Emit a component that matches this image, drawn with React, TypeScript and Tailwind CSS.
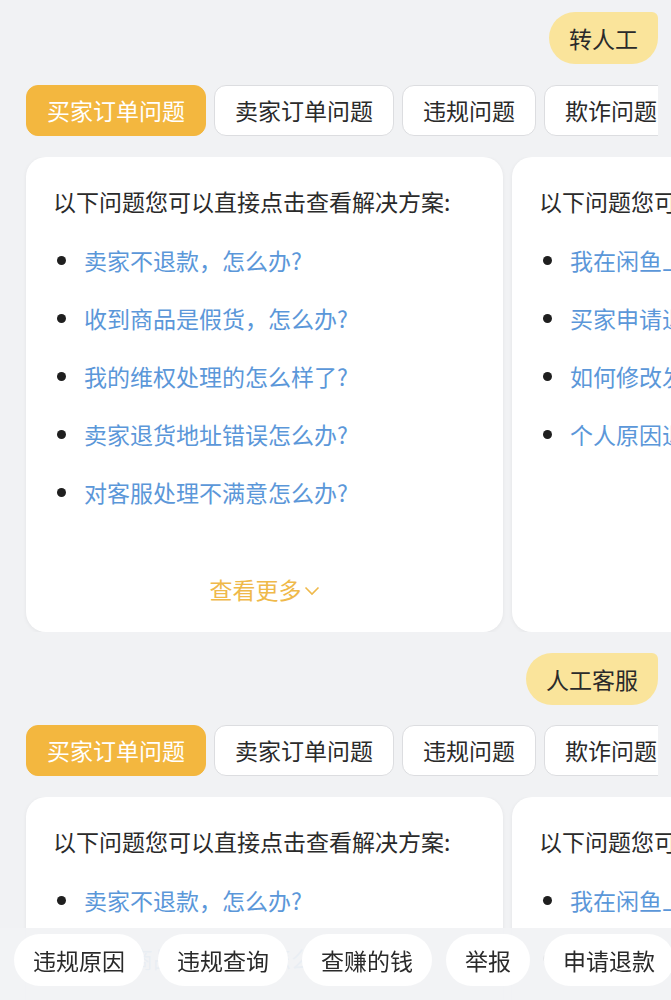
const tabs = ["买家订单问题", "卖家订单问题", "违规问题", "欺诈问题"];

const buyerQs = [
  "卖家不退款，怎么办?",
  "收到商品是假货，怎么办?",
  "我的维权处理的怎么样了?",
  "卖家退货地址错误怎么办?",
  "对客服处理不满意怎么办?",
];

const sellerQs = [
  "我在闲鱼上卖的东西被骗了怎么办?",
  "买家申请退款，怎么处理?",
  "如何修改发货地址?",
  "个人原因退款怎么办?",
];

const quick = ["违规原因", "违规查询", "查赚的钱", "举报", "申请退款"];

const Bubble = ({ text }: { text: string }) => (
  <div className="flex justify-end pr-[13px]">
    <div className="h-[52px] px-5 flex items-center rounded-[26px] rounded-tr-[6px] bg-[#fae49b] text-[23px] text-[#2a2a2a]">
      {text}
    </div>
  </div>
);

const Tabs = () => (
  <div className="ml-[26px] mr-[13px] overflow-hidden">
    <div className="flex gap-2 w-max">
      {tabs.map((t, i) => (
        <div
          key={t}
          className={
            i === 0
              ? "h-[51px] px-[20px] flex items-center rounded-xl bg-[#f3b73f] text-white text-[23px] border border-[#f3b73f]"
              : "h-[51px] px-[20px] flex items-center rounded-xl bg-white text-[#2a2a2a] text-[23px] border border-[#dcdde0]"
          }
        >
          {t}
        </div>
      ))}
    </div>
  </div>
);

const Card = ({ items, more }: { items: string[]; more?: boolean }) => (
  <div className="w-[477px] shrink-0 h-[475px] bg-white rounded-[20px] shadow-[0_1px_4px_rgba(0,0,0,0.06)] pt-[29px] px-[27px] flex flex-col whitespace-nowrap overflow-hidden">
    <div className="leading-[30px] text-[23px] text-[#2a2a2a]">
      以下问题您可以直接点击查看解决方案:
    </div>
    <ul className="mt-[15px]">
      {items.map((q) => (
        <li key={q} className="h-[58px] flex items-center">
          <span className="w-[9px] h-[9px] rounded-full bg-[#1f1f1f] ml-[4px] mr-[18px] shrink-0" />
          <span className="text-[23px] text-[#5b97d9]">{q}</span>
        </li>
      ))}
    </ul>
    {more && (
      <div className="mt-auto mb-[28px] flex justify-center items-center text-[23px] leading-[30px] text-[#efb94a]">
        查看更多
        <svg width="16" height="10" viewBox="0 0 16 10" className="ml-[2px] mt-[4px]">
          <path d="M1.5 1.5 L8 8 L14.5 1.5" fill="none" stroke="#efb94a" strokeWidth="1.6" />
        </svg>
      </div>
    )}
  </div>
);

const Cards = () => (
  <div className="pl-[26px] overflow-hidden">
    <div className="flex gap-[9px] w-max">
      <Card items={buyerQs} more />
      <Card items={sellerQs} />
    </div>
  </div>
);

export default function App() {
  return (
    <div className="min-h-screen bg-[#f1f2f4] font-['Noto_Sans_CJK_SC',sans-serif] pt-3 pb-[80px] overflow-hidden">
      <Bubble text="转人工" />
      <div className="mt-[21px]">
        <Tabs />
      </div>
      <div className="mt-[21px]">
        <Cards />
      </div>
      <div className="mt-[21px]">
        <Bubble text="人工客服" />
      </div>
      <div className="mt-5">
        <Tabs />
      </div>
      <div className="mt-[21px]">
        <Cards />
      </div>

      <div className="fixed left-0 right-0 bottom-0 h-[72px] bg-[#f1f2f4]/95 pt-[6px] pl-[14px] overflow-hidden">
        <div className="flex gap-[14px] w-max">
          {quick.map((q) => (
            <div
              key={q}
              className="h-[52px] px-[19px] flex items-center rounded-full bg-white text-[23px] text-[#2a2a2a]"
            >
              {q}
            </div>
          ))}
        </div>
      </div>
    </div>
  );
}
